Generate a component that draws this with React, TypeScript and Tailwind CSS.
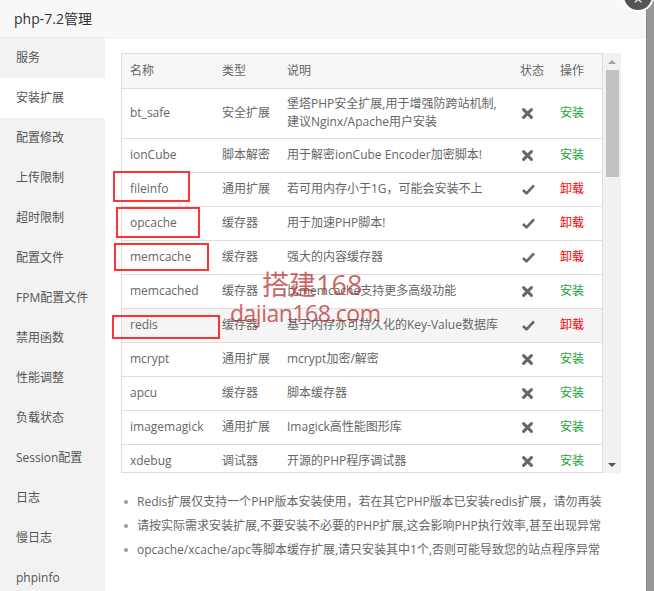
import React from 'react';

const FONT = { fontFamily: '"Open Sans", "Noto Sans CJK SC", sans-serif' };

const MENU = [
  '服务',
  '安装扩展',
  '配置修改',
  '上传限制',
  '超时限制',
  '配置文件',
  'FPM配置文件',
  '禁用函数',
  '性能调整',
  '负载状态',
  'Session配置',
  '日志',
  '慢日志',
  'phpinfo',
];

type Ext = {
  name: string;
  type: string;
  desc: string[];
  installed: boolean;
  hover?: boolean;
};

const EXTS: Ext[] = [
  { name: 'bt_safe', type: '安全扩展', desc: ['堡塔PHP安全扩展,用于增强防跨站机制,', '建议Nginx/Apache用户安装'], installed: false },
  { name: 'ionCube', type: '脚本解密', desc: ['用于解密ionCube Encoder加密脚本!'], installed: false },
  { name: 'fileinfo', type: '通用扩展', desc: ['若可用内存小于1G，可能会安装不上'], installed: true },
  { name: 'opcache', type: '缓存器', desc: ['用于加速PHP脚本!'], installed: true },
  { name: 'memcache', type: '缓存器', desc: ['强大的内容缓存器'], installed: true },
  { name: 'memcached', type: '缓存器', desc: ['比memcache支持更多高级功能'], installed: false },
  { name: 'redis', type: '缓存器', desc: ['基于内存亦可持久化的Key-Value数据库'], installed: true, hover: true },
  { name: 'mcrypt', type: '通用扩展', desc: ['mcrypt加密/解密'], installed: false },
  { name: 'apcu', type: '缓存器', desc: ['脚本缓存器'], installed: false },
  { name: 'imagemagick', type: '通用扩展', desc: ['Imagick高性能图形库'], installed: false },
  { name: 'xdebug', type: '调试器', desc: ['开源的PHP程序调试器'], installed: false },
];

const NOTES = [
  'Redis扩展仅支持一个PHP版本安装使用，若在其它PHP版本已安装redis扩展，请勿再装',
  '请按实际需求安装扩展,不要安装不必要的PHP扩展,这会影响PHP执行效率,甚至出现异常',
  'opcache/xcache/apc等脚本缓存扩展,请只安装其中1个,否则可能导致您的站点程序异常',
];

function StatusIcon({ on }: { on: boolean }) {
  return on ? (
    <svg width="13" height="11" viewBox="0 0 13 11">
      <path d="M1 6 L4.5 9.4 L12 1.4" fill="none" stroke="#666" strokeWidth="2.6" strokeLinejoin="round" />
    </svg>
  ) : (
    <svg width="11" height="11" viewBox="0 0 11 11">
      <path d="M1.6 1.6 L9.4 9.4 M9.4 1.6 L1.6 9.4" fill="none" stroke="#666" strokeWidth="3" strokeLinecap="round" />
    </svg>
  );
}

function Scrollbar() {
  return (
    <div className="w-[18px] h-[420px] bg-[#f1f1f1] flex flex-col items-center">
      <div className="h-[17px] flex items-center justify-center">
        <div className="w-0 h-0 border-l-[4px] border-r-[4px] border-b-[4px] border-l-transparent border-r-transparent border-b-[#a3a3a3]" />
      </div>
      <div className="w-[13px] h-[107px] bg-[#c1c1c1]" />
      <div className="flex-1" />
      <div className="h-[17px] flex items-center justify-center">
        <div className="w-0 h-0 border-l-[4px] border-r-[4px] border-t-[4px] border-l-transparent border-r-transparent border-t-[#505050]" />
      </div>
    </div>
  );
}

export default function App() {
  return (
    <div className="flex w-[654px] h-[591px] overflow-hidden text-[12px] text-[#666]" style={FONT}>
      <div className="relative w-[646px] h-full bg-white flex flex-col">
        {/* header */}
        <div className="h-[38px] shrink-0 bg-[#f8f8f8] border-b border-[#eee] flex items-center pl-[14px] text-[14px] text-[#333]">
          php-7.2管理
        </div>
        <div className="flex flex-1 min-h-0">
          {/* side menu */}
          <div className="w-[105px] shrink-0 bg-[#f2f2f2] flex flex-col">
            {MENU.map((m) => (
              <div
                key={m}
                className={`h-[40px] shrink-0 flex items-center pl-[16px] text-[12px] text-[#555] ${m === '安装扩展' ? 'bg-white' : ''}`}
              >
                {m}
              </div>
            ))}
          </div>

          {/* content */}
          <div className="relative flex-1 pl-[16px] pt-[15px]">
            <div className="flex items-start">
              <div className="w-[482px] h-[420px] overflow-hidden border border-[#ddd]">
                <table className="w-full border-collapse">
                  <thead>
                    <tr className="h-[34px] bg-[#f6f6f6] text-left">
                      <th className="font-normal pl-[8px] w-[92px]">名称</th>
                      <th className="font-normal pl-[8px] w-[65px]">类型</th>
                      <th className="font-normal pl-[8px]">说明</th>
                      <th className="font-normal pl-[8px] w-[40px]">状态</th>
                      <th className="font-normal pl-[8px] w-[50px]">操作</th>
                    </tr>
                  </thead>
                  <tbody>
                    {EXTS.map((e) => (
                      <tr
                        key={e.name}
                        className={`border-t border-[#ddd] ${e.desc.length > 1 ? 'h-[50px]' : 'h-[34px]'} ${e.hover ? 'bg-[#f5f5f5]' : ''}`}
                      >
                        <td className="pl-[8px]">{e.name}</td>
                        <td className="pl-[8px]">{e.type}</td>
                        <td className="pl-[8px] leading-[18px]">
                          {e.desc.map((d) => (
                            <div key={d}>{d}</div>
                          ))}
                        </td>
                        <td className="pl-[10px]">
                          <div className="flex items-center">
                            <StatusIcon on={e.installed} />
                          </div>
                        </td>
                        <td className="pl-[8px]">
                          {e.installed ? (
                            <span className="text-[#f00]">卸载</span>
                          ) : (
                            <span className="text-[#20a53a]">安装</span>
                          )}
                        </td>
                      </tr>
                    ))}
                  </tbody>
                </table>
              </div>
              <Scrollbar />
            </div>

            <ul className="mt-[17px] pl-[3px] flex flex-col">
              {NOTES.map((n) => (
                <li key={n} className="h-[24px] flex items-center whitespace-nowrap">
                  <span className="w-[13px] flex items-center">
                    <span className="w-[4px] h-[4px] rounded-full bg-[#999]" />
                  </span>
                  <span>{n}</span>
                </li>
              ))}
            </ul>

            {/* annotation boxes */}
            <div className="absolute left-[8px] top-[133px] w-[77px] h-[31px] border-2 border-[#f33]" />
            <div className="absolute left-[11px] top-[169px] w-[84px] h-[31px] border-2 border-[#f33]" />
            <div className="absolute left-[9px] top-[205px] w-[95px] h-[28px] border-2 border-[#f33]" />
            <div className="absolute left-[7px] top-[277px] w-[108px] h-[24px] border-2 border-[#f33]" />

            {/* watermark */}
            <div className="absolute left-[125px] top-[233px] flex flex-col items-start leading-none text-[#b33] opacity-75 pointer-events-none">
              <span className="ml-[32px] text-[27px]">搭建168</span>
              <span className="text-[23px] mt-[4px] tracking-[-0.5px]">dajian168.com</span>
            </div>
          </div>
        </div>

        {/* close button */}
        <div className="absolute -right-[8px] -top-[20px] w-[32px] h-[32px] rounded-full bg-[#555] border-2 border-white flex items-end justify-center pb-[3px] text-white text-[16px] leading-none">
          ×
        </div>
      </div>
      <div className="flex-1 bg-[#979797] border-l border-[#888]" />
    </div>
  );
}
